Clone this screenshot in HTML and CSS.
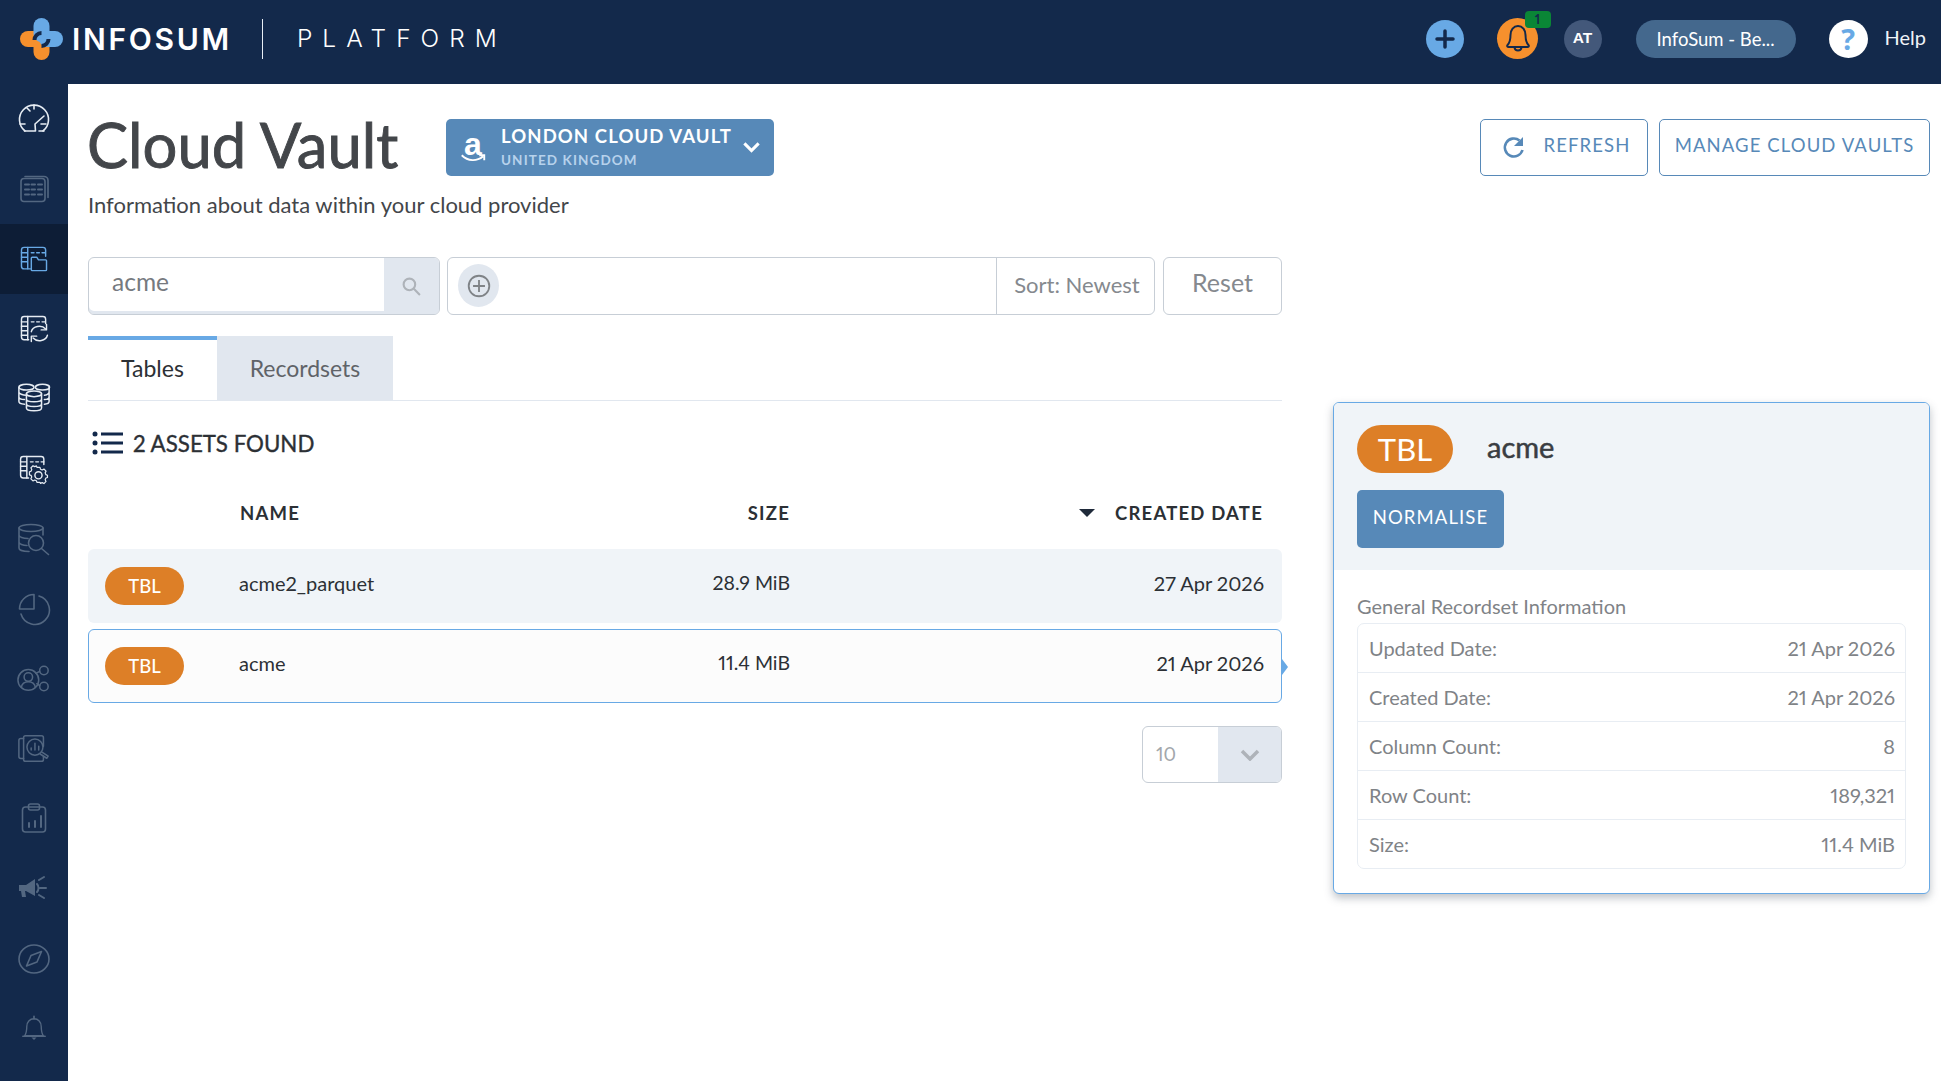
FILE: index.html
```html
<!DOCTYPE html>
<html lang="en">
<head>
<meta charset="utf-8">
<title>Cloud Vault</title>
<link rel="stylesheet" href="styles.css">
</head>
<body>
<div class="app">
  <header class="topbar">
    <div class="brand">
      <svg class="logo" viewBox="0 0 43 42">
        <rect class="logo-o" x="0" y="13" width="24" height="16" rx="8"/>
        <rect class="logo-o" x="13.500" y="18" width="16" height="24" rx="8"/>
        <rect class="logo-b" x="13.500" y="0" width="16" height="24" rx="8"/>
        <rect class="logo-b" x="19" y="13" width="24" height="16" rx="8"/>
        <path class="logo-ring" d="M14.500 22A7 7 0 0 1 21.500 15M28.500 21A7 7 0 0 1 21.500 28"/>
      </svg>
      <span class="brand-name">INFOSUM</span>
      <span class="brand-rule"></span>
      <span class="brand-sub">PLATFORM</span>
    </div>
    <div class="top-actions">
      <span class="round round-plus">
        <svg viewBox="0 0 38 38"><path d="M19 11v16M11 19h16"/></svg>
      </span>
      <span class="round round-bell">
        <svg viewBox="0 0 41 41"><path d="M10.500 27c2.500-2.500 3-5 3-10 0-5 3-9 7.500-9s7.500 4 7.500 9c0 5 .5 7.500 3 10 .8 1 0 2-1 2H11.500c-1 0-1.800-1-1-2zM17.500 29.500c.5 4 6.500 4 7 0"/></svg>
        <span class="badge">1</span>
      </span>
      <span class="round round-user">AT</span>
      <span class="org">InfoSum - Be...</span>
      <span class="round round-help">?</span>
      <span class="help-label">Help</span>
    </div>
  </header>
  <div class="body-row">
    <nav class="sidebar">
      <a class="nav-item on"><svg viewBox="0 1 34 34"><path d="M8 30A14.500 14.500 0 1 1 26 30"/><path d="M7.500 30H18.500L18 23l9-8"/><path d="M22 30h5M10 7l3 3M17 4v4M3 23h5M24 23h5"/></svg></a>
      <a class="nav-item off"><svg viewBox="0 1.500 34 34"><rect x="4" y="8" width="24" height="23" rx="3"/><path d="M8 6h19a4 4 0 0 1 4 4v17"/><path d="M8 14h4M14.500 14h3.500M21 14h4M8 19h4M14.500 19h3.500M21 19h4M8 24h4M14.500 24h3.500M21 24h4" stroke-width="2"/></svg></a>
      <a class="nav-item cur"><svg viewBox="-2 -2 38 38"><path d="M13 28H6a3 3 0 0 1-3-3V7a3 3 0 0 1 3-3h21a3 3 0 0 1 3 3v7"/><path d="M3 10h7M3 15h7M3 20h7M10 4v24M14 10h3M20 10h3M26 10h3"/><path d="M14 16a1 1 0 0 1 1-1h5l2 3h8a1 1 0 0 1 1 1v10a1 1 0 0 1-1 1H15a1 1 0 0 1-1-1z"/></svg></a>
      <a class="nav-item on"><svg viewBox="-2 -1 38 38"><path d="M11 30H6a3 3 0 0 1-3-3V7a3 3 0 0 1 3-3h21a3 3 0 0 1 3 3v5"/><path d="M3 10h7M3 15h7M3 20h7M3 25h7M10 4v26M14 10h3M20 10h3M26 10h3"/><path d="M14 21a9 7.500 0 0 1 16-3M32 25a9 7.500 0 0 1-16 3"/><path d="M31 13v6h-6M14 32v-6h6"/></svg></a>
      <a class="nav-item on"><svg viewBox="0 2.500 36 34"><ellipse cx="10" cy="7" rx="8" ry="3"/><path d="M2 7v15c0 2 3 3 6 3M2 12c0 2 4 3.500 8 3.500M2 17c0 2 3 3 6 3"/><ellipse cx="27" cy="7" rx="7.500" ry="3"/><path d="M34 7v15c0 2-2 3-5 3M34 12c0 2-2 3-5 3.500M34 17c0 2-2 3-5 3"/><ellipse cx="18" cy="14" rx="8" ry="3"/><path d="M10 14v15c0 4 16 4 16 0V14M10 19.500c0 4 16 4 16 0M10 24.500c0 4 16 4 16 0"/></svg></a>
      <a class="nav-item on"><svg viewBox="-2 -3 38 38"><path d="M11 26H5a3 3 0 0 1-3-3V5a3 3 0 0 1 3-3h20a3 3 0 0 1 3 3v6"/><path d="M2 8h7M2 13h7M2 18h7M9 2v24M13 8h3M19 8h3M25 8h3"/><circle cx="22" cy="23" r="4"/><path d="M20 13h4l.7 2.500 2.300 1 2.300-1.200 2.800 2.800-1.200 2.300 1 2.400 2.100.7v3l-2.100.7-1 2.300 1.200 2.300-2.800 2.800-2.300-1.200-2.300 1L24 33h-4l-.7-2.100-2.300-1-2.300 1.200-2.800-2.800 1.200-2.300-1-2.300-2.100-.7v-4l2.100-.7 1-2.300-1.200-2.300 2.800-2.800 2.300 1.200 2.300-1z" transform="translate(3.500 3.200) scale(.84)"/></svg></a>
      <a class="nav-item off"><svg viewBox="0 0 34 34"><ellipse cx="14" cy="6" rx="12" ry="3.500"/><path d="M2 6v20c0 2 4 3.500 10 3.500M26 6v7M2 13c0 2 4 3.500 9 3.500M2 20c0 2 4 3.500 8 3.500"/><circle cx="19" cy="21" r="7.500"/><path d="M24.500 26.500l7 6"/></svg></a>
      <a class="nav-item off"><svg viewBox="0 0 34 34"><path d="M17 2.500V17H2.500A14.500 14.500 0 0 1 17 2.500z"/><path d="M22 4a14.500 14.500 0 1 1-18 18"/></svg></a>
      <a class="nav-item off"><svg viewBox="0 0 36 34"><circle cx="12" cy="18" r="11"/><circle cx="12" cy="15" r="4.500"/><path d="M4.500 26c1-5 4-6 7.500-6s6.500 1 7.500 6"/><circle cx="28.500" cy="8" r="4.500"/><circle cx="28.500" cy="25" r="4.500"/><path d="M20 11l4-2M21 22l3 2"/></svg></a>
      <a class="nav-item off"><svg viewBox="0 0 36 34"><path d="M7 6H4a2 2 0 0 0-2 2v17a2 2 0 0 0 2 2h3"/><path d="M25 3H9a2 2 0 0 0-2 2v23a2 2 0 0 0 2 2h17a2 2 0 0 0 2-2v-3M28 14V5a2 2 0 0 0-2-2"/><circle cx="19" cy="15" r="8.500"/><path d="M15 18v-2M19 18v-7M23 18v-4" /><path d="M26 20l7 4.500-1.500 2.300-7-4.500"/></svg></a>
      <a class="nav-item off"><svg viewBox="0 0 34 34"><rect x="5.500" y="5" width="23" height="25" rx="3"/><rect x="11.500" y="2" width="11" height="6" rx="2"/><path d="M12 25v-4M18 25v-6M24 25V14" stroke-width="2"/></svg></a>
      <a class="nav-item off"><svg viewBox="0 0 34 34"><path class="fill" d="M2 13h7l9-6v17l-9-5H8l1 6H5l-1-6H2z"/><path d="M20 12c2 2 2 6 0 8M23 16h6M22 8l5-3M22 23l5 3" stroke-width="2"/></svg></a>
      <a class="nav-item off"><svg viewBox="0 0 34 34"><ellipse cx="17" cy="17" rx="15" ry="14"/><path d="M24.500 9.500L20 20l-10.500 4L14 13.500z"/></svg></a>
      <a class="nav-item off"><svg viewBox="-3 -2 40 40"><path d="M6 26c2-3 2.500-5 2.500-11 0-5 3.500-9 8.500-9s8.500 4 8.500 9c0 6 .5 8 2.500 11z"/><path d="M17 3v3M4 26.500h26" stroke-width="2"/><path class="fill" d="M14 28h6l-3 3z"/></svg></a>
    </nav>
    <main class="main">
      <div class="page-head">
        <div class="head-left">
          <h1>Cloud Vault</h1>
          <div class="vault">
            <div class="amazon">
              <span class="amazon-a">a</span>
              <svg viewBox="0 0 20 8"><path d="M1 1c5 5 12 5 17 1M15 1h4v4"/></svg>
            </div>
            <div class="vault-text">
              <div class="vault-name">LONDON CLOUD VAULT</div>
              <div class="vault-region">UNITED KINGDOM</div>
            </div>
            <svg class="vault-chev" viewBox="0 0 16 10"><path d="M2 2l6 6 6-6"/></svg>
          </div>
        </div>
        <div class="head-actions">
          <button class="btn-line btn-refresh">
            <svg viewBox="0 0 24 24"><path d="M20.500 14a9 9 0 1 1-3-9.500"/><path class="fill" d="M21 1v9h-9z"/></svg>
            <span>REFRESH</span>
          </button>
          <button class="btn-line btn-manage">MANAGE CLOUD VAULTS</button>
        </div>
      </div>
      <p class="subtitle">Information about data within your cloud provider</p>
      <div class="work">
        <section class="left">
          <div class="filters">
            <div class="search">
              <span class="search-text">acme</span>
              <span class="search-btn"><svg viewBox="0 0 20 20"><circle cx="8" cy="8" r="5.500"/><path d="M12 12l6 6"/></svg></span>
            </div>
            <div class="filter">
              <span class="add"><svg viewBox="0 0 24 24"><circle cx="12" cy="12" r="9.500"/><path d="M12 6.500v11M6.500 12h11"/></svg></span>
              <span class="sort">Sort: Newest</span>
            </div>
            <div class="reset">Reset</div>
          </div>
          <div class="tabs">
            <div class="tab tab-on">Tables</div>
            <div class="tab">Recordsets</div>
          </div>
          <div class="found">
            <svg viewBox="0 0 32 24"><circle cx="3" cy="3" r="2.500"/><circle cx="3" cy="12" r="2.500"/><circle cx="3" cy="21" r="2.500"/><path d="M9 1.500h22v3H9zM9 10.500h22v3H9zM9 19.500h22v3H9z"/></svg>
            <span>2 ASSETS FOUND</span>
          </div>
          <div class="thead">
            <span class="th-name">NAME</span>
            <span class="th-size">SIZE</span>
            <span class="th-date"><i class="sort-arrow"></i>CREATED DATE</span>
          </div>
          <div class="row row-alt">
            <span class="pill">TBL</span>
            <span class="cell-name">acme2_parquet</span>
            <span class="cell-size">28.9 MiB</span>
            <span class="cell-date">27 Apr 2026</span>
          </div>
          <div class="row row-sel">
            <span class="pill">TBL</span>
            <span class="cell-name">acme</span>
            <span class="cell-size">11.4 MiB</span>
            <span class="cell-date">21 Apr 2026</span>
            <i class="row-arrow"></i>
          </div>
          <div class="pager-wrap">
            <div class="pager">
              <span class="pager-val">10</span>
              <span class="pager-btn"><svg viewBox="0 0 20 12"><path d="M2 2l8 8 8-8"/></svg></span>
            </div>
          </div>
        </section>
        <aside class="panel">
          <div class="panel-head">
            <div class="panel-title">
              <span class="pill pill-lg">TBL</span>
              <span class="panel-name">acme</span>
            </div>
            <button class="normalise">NORMALISE</button>
          </div>
          <div class="panel-body">
            <div class="info-title">General Recordset Information</div>
            <div class="info">
              <div class="info-row"><span>Updated Date:</span><span>21 Apr 2026</span></div>
              <div class="info-row"><span>Created Date:</span><span>21 Apr 2026</span></div>
              <div class="info-row"><span>Column Count:</span><span>8</span></div>
              <div class="info-row"><span>Row Count:</span><span>189,321</span></div>
              <div class="info-row"><span>Size:</span><span>11.4 MiB</span></div>
            </div>
          </div>
        </aside>
      </div>
    </main>
  </div>
</div>
</body>
</html>
```
FILE: styles.css
```css
* { box-sizing: border-box; }
html, body { margin: 0; padding: 0; }
body { font-family: Lato, "Open Sans", sans-serif; font-variant-numeric: proportional-nums; color: #43464a; background: #fff; }
.app { width: 1941px; height: 1081px; overflow: hidden; display: flex; flex-direction: column; }

.topbar { height: 84px; flex: none; background: #13294b; display: flex; align-items: center; justify-content: space-between; color: #fff; }
.brand { display: flex; align-items: center; padding: 0 0 6px 20px; }
.logo { width: 43px; height: 42px; }
.logo-o { fill: #f6902d; }
.logo-b { fill: #68a9e5; }
.logo-ring { fill: none; stroke: #13294b; stroke-width: 4; }
.brand-name { font-family: Inter, sans-serif; font-weight: 600; font-size: 30px; letter-spacing: 2.700px; margin-left: 9px; }
.brand-rule { width: 1px; height: 40px; background: #e8eef5; margin-left: 30px; }
.brand-sub { font-family: Inter, sans-serif; font-weight: 300; font-size: 24.500px; letter-spacing: 10px; margin: -2px 0 0 34px; }
.top-actions { display: flex; align-items: center; height: 100%; padding-bottom: 7px; padding-right: 15px; }
.round { display: flex; align-items: center; justify-content: center; border-radius: 50%; width: 38px; height: 38px; position: relative; }
.round svg { width: 100%; height: 100%; display: block; fill: none; stroke-linecap: round; stroke-linejoin: round; }
.round-plus { background: #68a9e5; margin-right: 33px; }
.round-plus svg { stroke: #13294b; stroke-width: 3.500; }
.round-bell { background: #f6902d; width: 41px; height: 41px; margin-right: 26px; }
.round-bell svg { stroke: #13294b; stroke-width: 2; }
.badge { position: absolute; left: 28px; top: -7px; width: 26px; height: 17px; border-radius: 4px; background: #0a8636; color: #13294b; font-size: 13px; font-weight: 700; line-height: 17px; text-align: center; }
.round-user { background: #43587a; font-family: "Liberation Sans", sans-serif; font-weight: 700; font-size: 15.500px; color: #fff; margin-right: 34px; padding-bottom: 2px; }
.org { width: 160px; height: 38px; border-radius: 19px; background: #44688d; display: flex; align-items: center; justify-content: center; font-size: 18.500px; color: #fff; margin-right: 33px; }
.round-help { background: #fff; color: #68a9e5; font-family: "Open Sans", sans-serif; font-weight: 700; font-size: 29px; margin-right: 17px; width: 39px; }
.help-label { font-size: 20px; color: #f0f4f8; margin-top: -4px; }

.body-row { flex: 1; display: flex; min-height: 0; }
.sidebar { width: 68px; flex: none; background: #13294b; display: flex; flex-direction: column; }
.nav-item { height: 70px; flex: none; display: flex; align-items: center; justify-content: center; }
.nav-item svg { width: 34px; height: 34px; fill: none; stroke: currentColor; stroke-width: 1.600; stroke-linecap: round; stroke-linejoin: round; }
.nav-item svg .fill { fill: currentColor; stroke: none; }
.nav-item.on { color: #e6ecf3; }
.nav-item.off { color: #536781; }
.nav-item.cur { color: #68a9e5; background: #0d1d36; }

.main { flex: 1; min-width: 0; padding: 35px 11px 0 20px; }
.page-head { display: flex; justify-content: space-between; height: 57px; }
.head-left { display: flex; align-items: center; }
h1 { margin: -7px 0 0 -1px; font-family: Lato, sans-serif; font-weight: 400; font-size: 61.500px; line-height: 57px; color: #43464a; width: 359px; white-space: nowrap; -webkit-text-stroke: 0.9px #43464a; }
.vault { width: 328px; height: 57px; border-radius: 5px; background: #5789b8; color: #fff; display: flex; align-items: center; padding-left: 14px; position: relative; }
.amazon { width: 26px; display: flex; flex-direction: column; align-items: center; }
.amazon-a { font-family: "Liberation Sans", sans-serif; font-weight: 700; font-size: 32px; line-height: 24px; }
.amazon svg { width: 26px; height: 10px; fill: none; stroke: #fff; stroke-width: 1.500; margin-top: -2px; }
.vault-text { margin-left: 15px; margin-top: -2px; }
.vault-name { font-weight: 700; font-size: 18.500px; letter-spacing: 1.100px; line-height: 24px; white-space: nowrap; }
.vault-region { font-weight: 700; font-size: 13.500px; letter-spacing: 1.100px; color: #b7d2ec; line-height: 20px; margin-top: 2px; }
.vault-chev { position: absolute; right: 13px; top: 22px; width: 19px; height: 12px; fill: none; stroke: #fff; stroke-width: 2.600; }
.head-actions { display: flex; gap: 11px; }
.btn-line { height: 57px; background: #fff; border: 1px solid #5789b8; border-radius: 5px; color: #5789b8; font-family: Lato, sans-serif; font-size: 18.500px; letter-spacing: 1.100px; display: flex; align-items: center; justify-content: center; padding: 0 0 5px; }
.btn-refresh { width: 168px; gap: 18px; padding-left: 4px; }
.btn-refresh svg { width: 24px; height: 24px; fill: none; stroke: #5789b8; stroke-width: 2.600; margin-top: 5px; }
.btn-refresh svg .fill { fill: #5789b8; stroke: none; }
.btn-manage { width: 271px; }
.subtitle { margin: 16px 0 0; font-size: 22px; line-height: 26px; color: #43464a; }

.work { display: flex; gap: 51px; margin-top: 39px; align-items: flex-start; }
.left { width: 1194px; flex: none; }
.filters { display: flex; height: 58px; gap: 7px; }
.search { width: 352px; display: flex; border: 1px solid #c7ced6; border-radius: 6px; overflow: hidden; box-shadow: inset 0 -3px 0 #e1e7ef; }
.search-text { flex: 1; padding-left: 23px; font-size: 24.500px; color: #767a7f; line-height: 47px; }
.search-btn { width: 55px; background: #e1e7ef; display: flex; align-items: center; justify-content: center; }
.search-btn svg { width: 21px; height: 21px; fill: none; stroke: #aeb3b9; stroke-width: 2; }
.filter { width: 708px; display: flex; align-items: stretch; justify-content: space-between; border: 1px solid #c7ced6; border-radius: 6px; }
.add { width: 41px; height: 43px; margin: 6px 0 0 10px; border-radius: 50%; background: #e1e7ef; display: flex; align-items: center; justify-content: center; }
.add svg { width: 26px; height: 26px; fill: none; stroke: #7f8387; stroke-width: 1.700; }
.sort { width: 158px; border-left: 1px solid #c7ced6; display: flex; align-items: center; justify-content: center; font-size: 22px; color: #85898e; padding: 0 0 3px 3px; }
.reset { width: 119px; margin-left: 1px; border: 1px solid #c7ced6; border-radius: 6px; display: flex; align-items: center; justify-content: center; font-size: 25px; color: #85898e; padding-bottom: 8px; }
.tabs { display: flex; margin-top: 21px; height: 65px; border-bottom: 1px solid #e1e7ef; }
.tab { width: 176px; height: 64px; background: #e1e7ef; display: flex; align-items: center; justify-content: center; font-size: 23px; color: #5f6368; padding-bottom: 1px; }
.tab-on { width: 129px; background: #fff; border-top: 4px solid #68a9e5; color: #2c3035; padding-bottom: 5px; }
.found { display: flex; align-items: center; height: 24px; margin: 30px 0 0 4px; font-size: 22.300px; color: #2c3035; -webkit-text-stroke: 0.35px #2c3035; }
.found svg { width: 32px; height: 24px; fill: #13294b; margin-right: 9px; }
.thead { position: relative; height: 24px; margin-top: 46px; font-size: 18.500px; font-weight: 700; letter-spacing: 1.200px; color: #2c3035; line-height: 24px; }
.th-name { position: absolute; left: 152px; top: 0; }
.th-size { position: absolute; right: 492px; top: 0; }
.th-date { position: absolute; right: 19px; top: 0; display: flex; align-items: center; }
.sort-arrow { width: 0; height: 0; border-style: solid; border-width: 8px 8px 0; border-color: #1f2a3a transparent transparent; margin-right: 20px; }
.row { display: grid; grid-template-columns: 150px 400px 151px 1fr; align-items: center; height: 74px; padding-right: 17px; border-radius: 6px; border: 1px solid transparent; font-size: 20px; color: #2c3035; position: relative; }
.row-alt { background: #f0f4f8; margin-top: 24px; }
.row-sel { background: #fcfcfc; border-color: #68a9e5; margin-top: 6px; }
.cell-name, .cell-size, .cell-date { margin-top: -7px; }
.cell-size { text-align: right; font-size: 19.500px; }
.cell-date { text-align: right; }
.row-arrow { position: absolute; left: 100%; top: 29px; margin-left: 1px; width: 0; height: 0; border-style: solid; border-width: 8px 0 8px 6px; border-color: transparent transparent transparent #68a9e5; }
.pill { display: flex; align-items: center; justify-content: center; width: 79px; height: 38px; margin-left: 16px; border-radius: 19px; background: #dd7f27; color: #fff; font-size: 18.500px; font-weight: 500; }
.pager-wrap { display: flex; justify-content: flex-end; margin-top: 23px; }
.pager { width: 140px; height: 57px; display: flex; border: 1px solid #c7ced6; border-radius: 6px; overflow: hidden; }
.pager-val { flex: 1; padding-left: 13px; line-height: 53px; font-size: 19px; color: #a3a7ac; }
.pager-btn { width: 63px; background: #e1e7ef; display: flex; align-items: center; justify-content: center; }
.pager-btn svg { width: 20px; height: 12px; fill: none; stroke: #aeb3b9; stroke-width: 3.500; }

.panel { width: 597px; height: 492px; margin-top: 145px; border: 1px solid #68a9e5; border-radius: 6px; box-shadow: 0 4px 8px rgba(70, 80, 95, 0.35); background: #fff; overflow: hidden; }
.panel-head { height: 167px; background: #f0f4f8; padding: 22px 0 0 23px; }
.panel-title { display: flex; align-items: center; }
.pill-lg { width: 96px; height: 48px; border-radius: 24px; margin-left: 0; font-size: 31px; font-weight: 400; }
.panel-name { margin: -6px 0 0 34px; font-size: 29px; color: #3a3d42; -webkit-text-stroke: 0.5px #3a3d42; }
.normalise { display: block; width: 147px; height: 58px; margin-top: 17px; padding: 0 0 4px; background: #5789b8; border: 0; border-radius: 5px; color: #fff; font-family: Lato, sans-serif; font-size: 18.500px; letter-spacing: 1.100px; }
.panel-body { padding: 20px 23px 0; }
.info-title { font-size: 20px; line-height: 32px; color: #7f8387; }
.info { border: 1px solid #e8edf3; border-radius: 7px; margin-top: 1px; }
.info-row { height: 49px; display: flex; align-items: center; justify-content: space-between; padding: 0 10px 0 11px; font-size: 20px; color: #7f8387; border-bottom: 1px solid #e8edf3; }
.info-row:last-child { border-bottom: 0; height: 48px; }
```
